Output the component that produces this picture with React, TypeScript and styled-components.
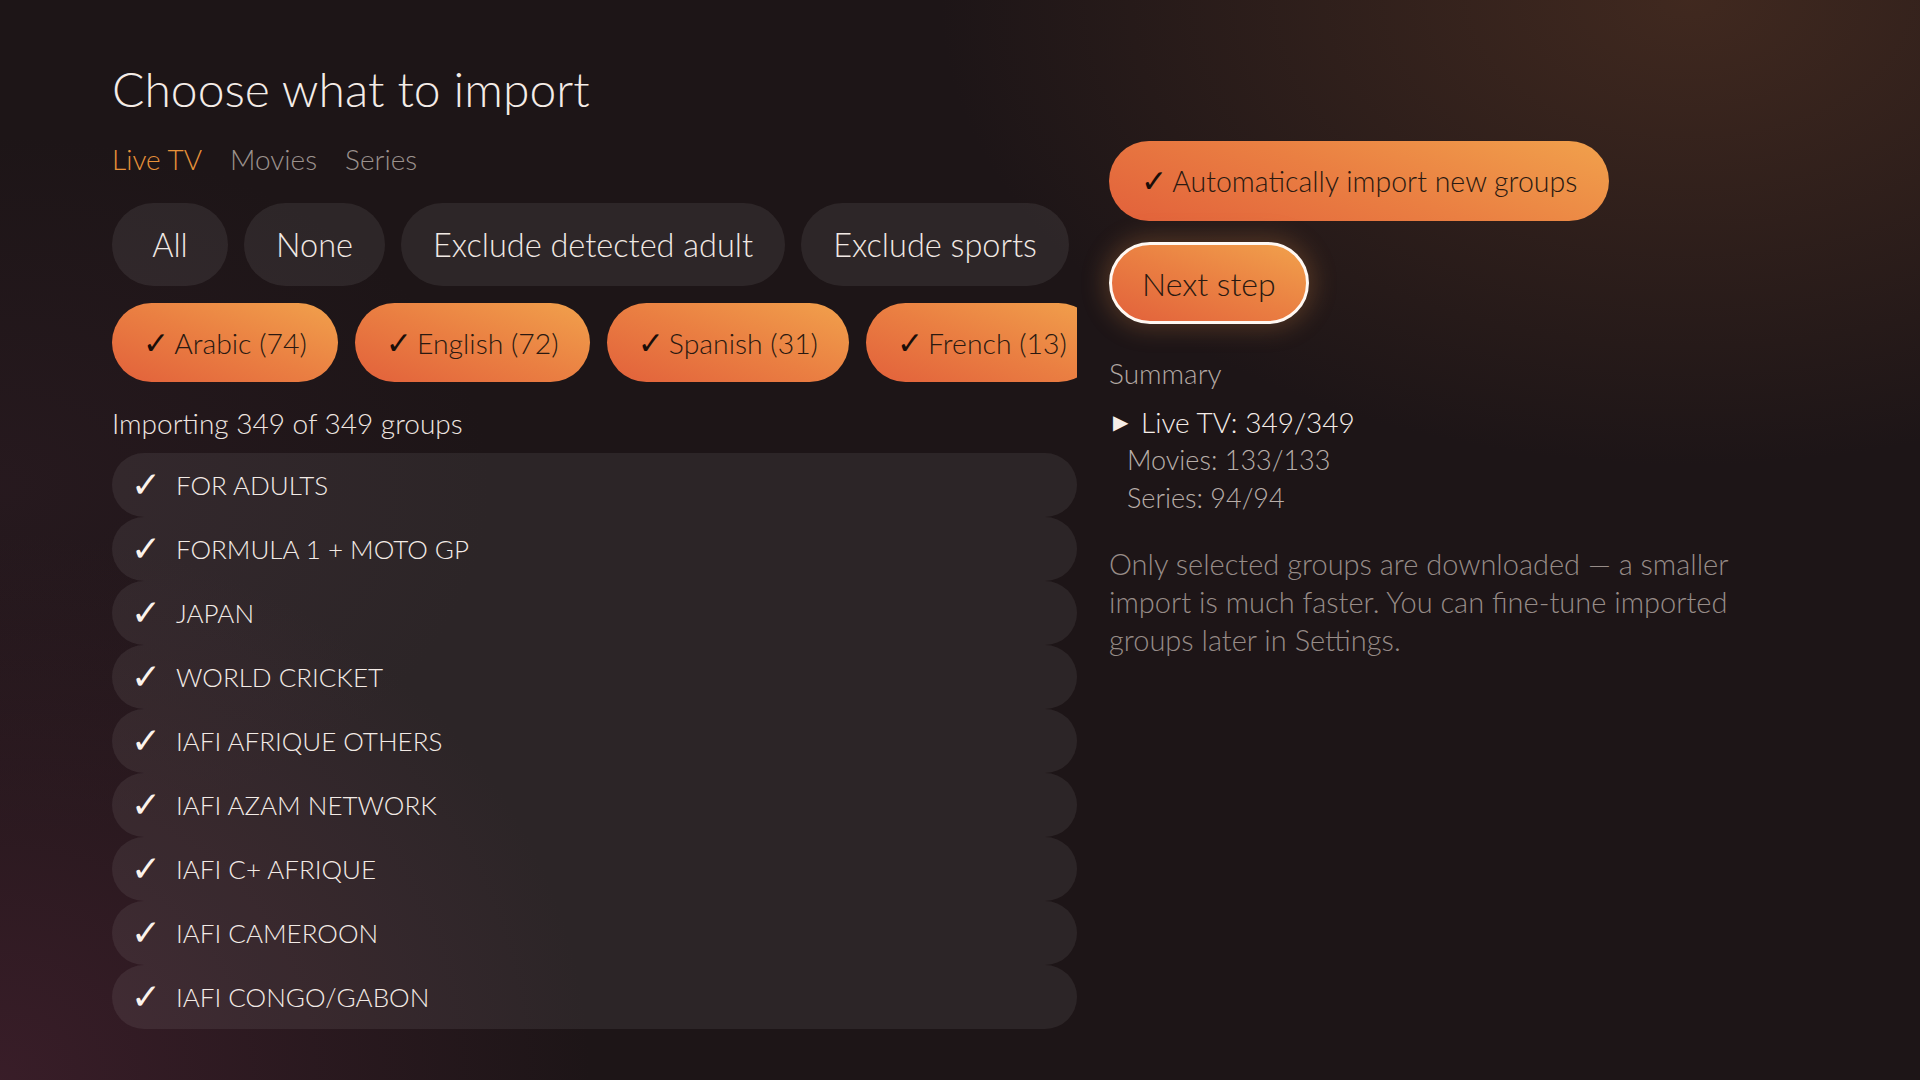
import React from "react";
import styled, { createGlobalStyle } from "styled-components";

const GlobalStyle = createGlobalStyle`
  html, body {
    margin: 0;
    padding: 0;
  }
  body {
    background: #1d1517;
    font-family: Lato, "Noto Sans", sans-serif;
    font-weight: 300;
  }
  * {
    box-sizing: border-box;
  }
`;

const tabs = ["Live TV", "Movies", "Series"];
const quickFilters = ["All", "None", "Exclude detected adult", "Exclude sports"];
const languages = ["Arabic (74)", "English (72)", "Spanish (31)", "French (13)"];
const groups = [
  "FOR ADULTS",
  "FORMULA 1 + MOTO GP",
  "JAPAN",
  "WORLD CRICKET",
  "IAFI AFRIQUE OTHERS",
  "IAFI AZAM NETWORK",
  "IAFI C+ AFRIQUE",
  "IAFI CAMEROON",
  "IAFI CONGO/GABON",
];
const summary = [
  { label: "Live TV: 349/349", active: true },
  { label: "Movies: 133/133", active: false },
  { label: "Series: 94/94", active: false },
];

const App: React.FC = () => {
  return (
    <>
      <GlobalStyle />
      <Page>
        <LeftColumn>
          <Title>Choose what to import</Title>
          <Tabs>
            {tabs.map((t, i) => (
              <Tab key={t} $active={i === 0}>
                {t}
              </Tab>
            ))}
          </Tabs>
          <PillRow>
            {quickFilters.map((f) => (
              <PillButton key={f}>{f}</PillButton>
            ))}
          </PillRow>
          <ChipRow>
            {languages.map((l) => (
              <Chip key={l}>
                <Check>✓</Check>
                {l}
              </Chip>
            ))}
          </ChipRow>
          <Count>Importing 349 of 349 groups</Count>
          <GroupList>
            {groups.map((g) => (
              <GroupRow key={g}>
                <RowCheck>✓</RowCheck>
                <span>{g}</span>
              </GroupRow>
            ))}
          </GroupList>
        </LeftColumn>

        <RightColumn>
          <AutoButton>
            <Check>✓</Check>
            Automatically import new groups
          </AutoButton>
          <NextButton>Next step</NextButton>
          <SummaryTitle>Summary</SummaryTitle>
          <SummaryList>
            {summary.map((s) => (
              <SummaryItem key={s.label} $active={s.active}>
                {s.active && <Arrow>▶</Arrow>}
                {s.label}
              </SummaryItem>
            ))}
          </SummaryList>
          <Note>
            Only selected groups are downloaded — a smaller import is much
            faster. You can fine-tune imported groups later in Settings.
          </Note>
        </RightColumn>
      </Page>
    </>
  );
};

const Page = styled.div`
  width: 1920px;
  height: 1080px;
  overflow: hidden;
  display: grid;
  grid-template-columns: 965px 1fr;
  column-gap: 32px;
  padding: 60px 0 0 112px;
  background:
    radial-gradient(ellipse 1000px 620px at 88% 0%, rgba(72, 45, 33, 0.82), transparent 75%),
    radial-gradient(ellipse 820px 760px at 0% 100%, rgba(66, 32, 46, 0.75), transparent 72%),
    radial-gradient(ellipse 700px 500px at 0% 45%, rgba(46, 28, 36, 0.55), transparent 70%),
    #1d1517;
`;

const LeftColumn = styled.div`
  display: flex;
  flex-direction: column;
  min-width: 0;
`;

const Title = styled.h1`
  margin: 0;
  font-size: 48px;
  line-height: 58px;
  font-weight: 300;
  color: #f4ece7;
`;

const Tabs = styled.div`
  display: flex;
  gap: 28px;
  margin-top: 25px;
`;

const Tab = styled.span<{ $active?: boolean }>`
  font-size: 28px;
  line-height: 33px;
  color: ${(p) => (p.$active ? "#e8923a" : "#9b918d")};
`;

const PillRow = styled.div`
  display: flex;
  gap: 16px;
  margin-top: 27px;
`;

const PillButton = styled.button`
  height: 83px;
  min-width: 116px;
  padding: 0 32px;
  border: none;
  border-radius: 42px;
  background: rgba(255, 255, 255, 0.075);
  color: #f1e9e4;
  font-family: inherit;
  font-size: 32.5px;
  font-weight: 300;
  white-space: nowrap;
`;

const ChipRow = styled.div`
  display: flex;
  gap: 17px;
  margin-top: 17px;
  overflow: hidden;
`;

const orange = `linear-gradient(20deg, #e2613b 0%, #ea7f42 50%, #f1a14c 100%)`;

const Chip = styled.div`
  flex-shrink: 0;
  display: flex;
  align-items: center;
  height: 79px;
  padding: 0 31px;
  border-radius: 40px;
  background: ${orange};
  color: #2a1911;
  font-size: 28.4px;
  white-space: nowrap;
`;

const Check = styled.span`
  font-family: "DejaVu Sans", sans-serif;
  font-weight: 700;
  font-size: 1.1em;
  color: #1a0e09;
  margin-right: 5px;
`;

const Count = styled.div`
  margin-top: 24px;
  font-size: 28px;
  line-height: 34px;
  color: #efe6e1;
`;

const GroupList = styled.div`
  margin-top: 13px;
  display: flex;
  flex-direction: column;
`;

const GroupRow = styled.div`
  flex-shrink: 0;
  height: 64px;
  display: flex;
  align-items: center;
  gap: 18px;
  padding-left: 19px;
  border-radius: 32px;
  background: rgba(255, 255, 255, 0.07);
  color: #f3ebe6;
  font-size: 26px;
`;

const RowCheck = styled.span`
  width: 27px;
  font-family: "DejaVu Sans", sans-serif;
  font-weight: 700;
  font-size: 36px;
  line-height: 1;
  color: #fbf3ec;
`;

const RightColumn = styled.div`
  display: flex;
  flex-direction: column;
  align-items: flex-start;
  padding-top: 81px;
`;

const AutoButton = styled.button`
  display: flex;
  align-items: center;
  height: 80px;
  padding: 0 32px;
  border: none;
  border-radius: 40px;
  background: ${orange};
  color: #2a1911;
  font-family: inherit;
  font-size: 28.5px;
  font-weight: 300;
`;

const NextButton = styled.button`
  margin-top: 21px;
  height: 82px;
  padding: 0 30px;
  border: 3px solid #fff8f2;
  border-radius: 41px;
  background: ${orange};
  color: #2a1911;
  font-family: inherit;
  font-size: 32px;
  font-weight: 300;
  box-shadow: 0 0 22px 6px rgba(190, 120, 60, 0.28);
`;

const SummaryTitle = styled.div`
  margin-top: 32px;
  font-size: 28px;
  line-height: 34px;
  color: #b2a7a2;
`;

const SummaryList = styled.div`
  margin-top: 13px;
  display: flex;
  flex-direction: column;
`;

const SummaryItem = styled.div<{ $active?: boolean }>`
  display: flex;
  align-items: center;
  padding-left: ${(p) => (p.$active ? "4px" : "18px")};
  font-size: ${(p) => (p.$active ? "28px" : "27px")};
  line-height: 38px;
  color: ${(p) => (p.$active ? "#f4ece7" : "#b8aea9")};
`;

const Arrow = styled.span`
  font-family: "DejaVu Sans", sans-serif;
  font-size: 20px;
  margin-right: 13px;
  color: #f4ece7;
`;

const Note = styled.p`
  margin: 28px 0 0;
  max-width: 620px;
  font-size: 29px;
  line-height: 38px;
  color: #978c88;
`;

export default App;
